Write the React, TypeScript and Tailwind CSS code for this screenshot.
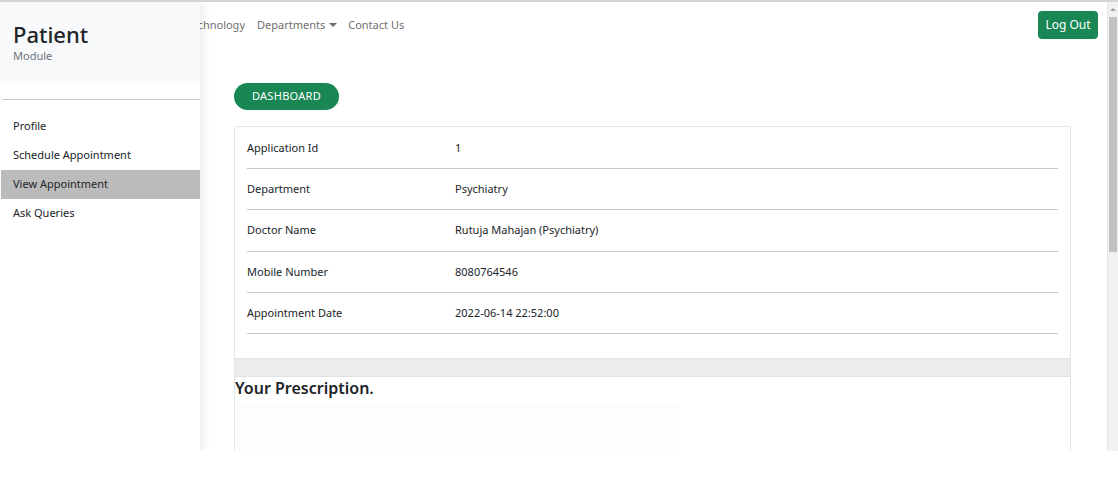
import React from 'react';

const details = [
  { label: 'Application Id', value: '1' },
  { label: 'Department', value: 'Psychiatry' },
  { label: 'Doctor Name', value: 'Rutuja Mahajan (Psychiatry)' },
  { label: 'Mobile Number', value: '8080764546' },
  { label: 'Appointment Date', value: '2022-06-14 22:52:00' },
];

const menu = ['Profile', 'Schedule Appointment', 'View Appointment', 'Ask Queries'];

const Sidebar: React.FC = () => (
  <aside className="absolute left-0 top-0 bottom-0 w-[200px] bg-white shadow-[4px_0_8px_rgba(0,0,0,0.07)] flex flex-col">
    <div className="h-[79px] shrink-0 bg-[#f8f9fa] pl-[13px] pt-[19px]">
      <div className="text-[22px] leading-[26px] font-medium text-[#212529]">Patient</div>
      <div className="text-[11px] leading-[18px] text-[#6c757d]">Module</div>
    </div>
    <div className="mt-[18px] ml-[2px] h-px shrink-0 bg-[#c8c8c8]" />
    <nav className="mt-[12px] flex flex-col">
      {menu.map((item) =>
        item === 'View Appointment' ? (
          <div key={item} className="h-[29px] flex items-center ml-[1px] pl-[12px] bg-[#bbbbbb] text-[11px] text-[#212529]">
            {item}
          </div>
        ) : (
          <div key={item} className="h-[29px] flex items-center pl-[13px] text-[11px] text-[#212529]">
            {item}
          </div>
        )
      )}
    </nav>
  </aside>
);

const Scrollbar: React.FC = () => (
  <div className="w-[11px] shrink-0 bg-[#f1f1f1] border-l border-[#e6e6e6] flex flex-col">
    <div className="h-[15px] flex items-center justify-center">
      <div className="w-0 h-0 border-l-[3px] border-r-[3px] border-b-[3px] border-l-transparent border-r-transparent border-b-[#a3a3a3]" />
    </div>
    <div className="h-[235px] mx-px bg-[#c1c1c1]" />
  </div>
);

export default function App() {
  return (
    <div className="w-[1118px] h-[478px] bg-white overflow-hidden" style={{ fontFamily: '"Noto Sans", "Open Sans", sans-serif' }}>
      <div className="h-[451px] flex border-t-2 border-[#d4d4d4] relative overflow-hidden">
        <div className="flex-1 flex flex-col">
          <header className="h-[46px] shrink-0 flex items-center pr-[9px]">
            <div className="w-[245px] flex justify-end overflow-hidden text-[11px] text-[#6f6f6f] whitespace-nowrap">
              <span className="mr-3">Home</span>
              <span className="mr-3">About</span>
              <span>Technology</span>
            </div>
            <div className="ml-[12px] flex items-center gap-[4px] text-[11px] text-[#6f6f6f]">
              Departments
              <span className="w-0 h-0 border-l-[4px] border-r-[4px] border-t-[4px] border-l-transparent border-r-transparent border-t-[#6f6f6f]" />
            </div>
            <div className="ml-[11px] text-[11px] text-[#6f6f6f]">Contact Us</div>
            <button className="ml-auto h-[28px] w-[60px] rounded-[4px] bg-[#198754] text-white text-[12px]">Log Out</button>
          </header>
          <main className="pl-[234px] pr-[36px] pt-[34px]">
            <button className="h-[27px] w-[105px] rounded-full bg-[#198754] text-white text-[11px] tracking-[0.3px]">DASHBOARD</button>
            <div className="mt-[16px] border border-[#e6e6e6] rounded-[3px]">
              <div className="px-[12px] pt-[1px] pb-[24px]">
                {details.map((d) => (
                  <div key={d.label} className="h-[41.3px] flex items-center border-b border-[#c8c8c8] text-[11px] text-[#212529]">
                    <div className="w-[208px]">{d.label}</div>
                    <div>{d.value}</div>
                  </div>
                ))}
              </div>
              <div className="h-[19px] bg-[#ececec] border-y border-[#e2e2e2]" />
              <h2 className="text-[16px] leading-[22px] font-semibold text-[#212529]">Your Prescription.</h2>
              <div className="mt-[5px] ml-px w-[444px] h-[60px] bg-[#fdfdfd]" />
            </div>
          </main>
        </div>
        <Scrollbar />
        <Sidebar />
      </div>
    </div>
  );
}
